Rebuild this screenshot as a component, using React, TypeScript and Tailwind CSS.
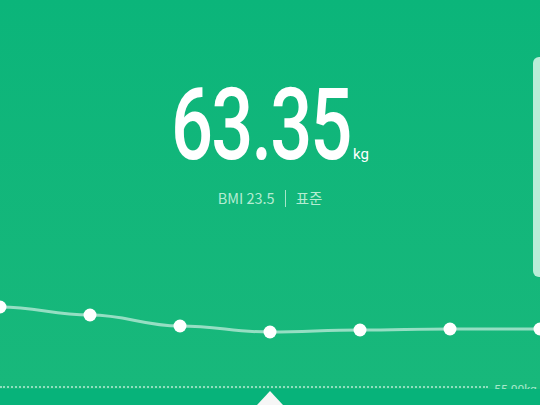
import React from "react";

const points = [
  [0, 12],
  [90, 20],
  [180, 31],
  [270, 37],
  [360, 35],
  [450, 34],
  [540, 34],
];

const buildPath = (pts: number[][]) => {
  let d = `M ${pts[0][0]} ${pts[0][1]}`;
  for (let i = 1; i < pts.length; i++) {
    const [x0, y0] = pts[i - 1];
    const [x1, y1] = pts[i];
    const dx = (x1 - x0) / 2.4;
    d += ` C ${x0 + dx} ${y0} ${x1 - dx} ${y1} ${x1} ${y1}`;
  }
  return d;
};

const WeightChart = () => (
  <svg width="540" height="45" viewBox="0 0 540 45" className="block overflow-visible">
    <path
      d={buildPath(points)}
      fill="none"
      stroke="rgba(255,255,255,0.55)"
      strokeWidth="3"
    />
    {points.map(([x, y]) => (
      <circle key={x} cx={x} cy={y} r="6.5" fill="#ffffff" />
    ))}
  </svg>
);

export default function App() {
  return (
    <div className="relative w-[540px] h-[405px] overflow-hidden bg-[#07b37a] font-['Roboto',sans-serif]">
      <div className="h-[389px] overflow-hidden flex flex-col bg-gradient-to-b from-[#0bb57a] to-[#18b87b]">
        <div className="mt-[75px] h-[100px] flex items-baseline justify-center">
          <div className="w-[176px] h-[100px] whitespace-nowrap">
            <span className="inline-block origin-left scale-x-[0.74] text-[100px] leading-none font-medium text-white tracking-[-2.5px]">
              63.35
            </span>
          </div>
          <span className="ml-[6px] text-[15px] leading-none font-normal text-white">
            kg
          </span>
        </div>

        <div className="mt-[13px] h-[20px] flex items-center justify-center text-[14.5px] leading-[20px] text-[#b4ecd2] font-['Noto_Sans_CJK_KR',sans-serif]">
          <span>BMI 23.5</span>
          <div className="mx-[10px] w-px h-[17px] bg-[#a6e6c9]" />
          <span>표준</span>
        </div>

        <div className="mt-[87px]">
          <WeightChart />
        </div>

        <div className="mt-[46px] flex items-start whitespace-nowrap">
          <div className="w-[488px] shrink-0 border-t-2 border-dotted border-[#8fdfbf]" />
          <span className="ml-[6px] -mt-[2px] text-[12px] leading-none text-[#a9e8cc]">
            55.00kg
          </span>
        </div>
      </div>

      <div className="h-[16px] flex justify-center">
        <div className="mt-[2px] w-0 h-0 border-l-[13px] border-r-[13px] border-b-[14px] border-l-transparent border-r-transparent border-b-[#f6f6f6]" />
      </div>

      <div className="absolute right-0 top-[57px] w-[7px] h-[220px] rounded-l-[6px] bg-[#b8eed8]" />
    </div>
  );
}
